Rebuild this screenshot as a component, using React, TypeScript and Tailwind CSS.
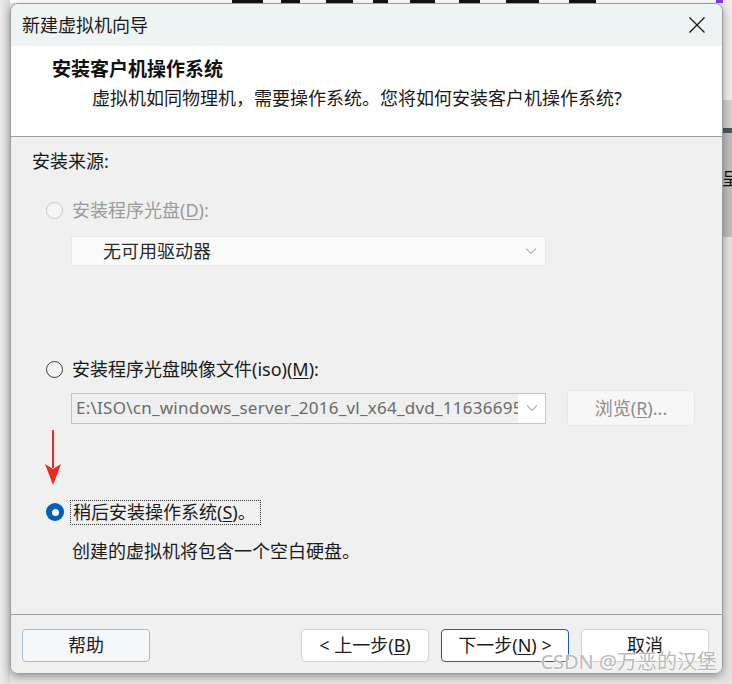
import React from 'react';

const font = { fontFamily: '"Noto Sans", "Noto Sans CJK SC", sans-serif' };

const Chevron: React.FC<{ color: string }> = ({ color }) => (
  <svg width="12" height="8" viewBox="0 0 12 8" fill="none">
    <path d="M1 1.5 L6 6.5 L11 1.5" stroke={color} strokeWidth="1.1" />
  </svg>
);

const Radio: React.FC<{ state: 'disabled' | 'off' | 'on' }> = ({ state }) => {
  if (state === 'on') {
    return (
      <span className="flex h-[18px] w-[18px] items-center justify-center rounded-full bg-[#005fb8]">
        <span className="h-[7px] w-[7px] rounded-full bg-white" />
      </span>
    );
  }
  if (state === 'disabled') {
    return <span className="h-[17px] w-[17px] rounded-full border border-[#c6c6c6] bg-[#f6f6f6]" />;
  }
  return <span className="h-[17px] w-[17px] rounded-full border border-[#3a3a3a] bg-[#f4f4f4]" />;
};

const Btn: React.FC<{ children: React.ReactNode; variant?: 'help' | 'primary' | 'plain' }> = ({ children, variant = 'plain' }) => {
  const cls =
    variant === 'help'
      ? 'border-[#a9bccf] bg-[#f4f8fb]'
      : variant === 'primary'
      ? 'border-[#1a5fa8] bg-white'
      : 'border-[#d2d2d2] bg-white';
  return (
    <button className={`flex h-[33px] w-[128px] items-center justify-center rounded-[4px] border text-[18px] text-[#1b1b1b] ${cls}`}>
      {children}
    </button>
  );
};

// glyph fragments of the desktop text peeking above the dialog
const peek = [
  { w: 'w-[34px]', ml: 'ml-[222px]' },
  { w: 'w-[22px]', ml: 'ml-[18px]' },
  { w: 'w-[30px]', ml: 'ml-[26px]' },
  { w: 'w-[16px]', ml: 'ml-[20px]' },
  { w: 'w-[28px]', ml: 'ml-[22px]' },
  { w: 'w-[24px]', ml: 'ml-[24px]' },
  { w: 'w-[36px]', ml: 'ml-[26px]' },
  { w: 'w-[30px]', ml: 'ml-[30px]' },
];

const App: React.FC = () => {
  return (
    <div className="flex h-[684px] w-[732px] overflow-hidden bg-[#e6e6e6]" style={font}>
      {/* left gutter */}
      <div className="w-[10px] shrink-0 bg-gradient-to-r from-[#ececec] to-[#d8d8d8]" />

      {/* dialog column */}
      <div className="flex w-[713px] shrink-0 flex-col">
        <div className="flex h-[3px] items-start bg-white">
          {peek.map((p, i) => (
            <div key={i} className={`h-[3px] bg-[#151515] ${p.w} ${p.ml}`} />
          ))}
          <div className="ml-[120px] h-[3px] w-[8px] bg-[#7c3aed]" />
        </div>

        <div className="relative flex h-[671px] flex-col overflow-hidden rounded-[8px] border border-[#9c9c9c] shadow-[0_3px_8px_rgba(0,0,0,0.35)]">
          {/* title bar */}
          <div className="flex h-[42px] shrink-0 items-center justify-between bg-[#eef3f3] pl-[11px] pr-[16px]">
            <span className="text-[18px] text-[#1a1a1a]">新建虚拟机向导</span>
            <svg width="18" height="18" viewBox="0 0 18 18">
              <path d="M1.5 1.5 L16.5 16.5 M16.5 1.5 L1.5 16.5" stroke="#1a1a1a" strokeWidth="1.3" />
            </svg>
          </div>

          {/* header */}
          <div className="flex h-[91px] shrink-0 flex-col border-b border-[#a0a0a0] bg-white">
            <div className="ml-[41px] mt-[11px] text-[19px] font-bold leading-[25px] text-[#111]">安装客户机操作系统</div>
            <div className="ml-[81px] mt-[4px] text-[18px] leading-[25px] text-[#1a1a1a]">
              虚拟机如同物理机，需要操作系统。您将如何安装客户机操作系统?
            </div>
          </div>

          {/* body */}
          <div className="relative flex flex-1 flex-col border-b border-[#a0a0a0] bg-[#f0f0f0] pl-[21px]">
            <div className="mt-[12px] text-[18px] leading-[24px] text-[#1a1a1a]">安装来源:</div>

            <div className="ml-[14px] mt-[25px] flex h-[24px] items-center gap-[9px]">
              <Radio state="disabled" />
              <span className="text-[18px] text-[#9b9b9b]">
                安装程序光盘(<span className="underline underline-offset-2">D</span>):
              </span>
            </div>

            <div className="ml-[39px] mt-[14px] flex h-[30px] w-[475px] items-center justify-between border border-[#e8e8e8] bg-[#fafafa] pl-[31px] pr-[8px]">
              <span className="text-[18px] text-[#2a2a2a]">无可用驱动器</span>
              <Chevron color="#b5b5b5" />
            </div>

            <div className="ml-[14px] mt-[91px] flex h-[24px] items-center gap-[9px]">
              <Radio state="off" />
              <span className="text-[18px] text-[#1a1a1a]">
                安装程序光盘映像文件(iso)(<span className="underline underline-offset-2">M</span>):
              </span>
            </div>

            <div className="ml-[39px] mt-[9px] flex items-center gap-[21px]">
              <div className="flex h-[31px] w-[475px] items-center border border-[#c5c5c5] bg-white">
                <div className="flex h-full w-[446px] items-center overflow-hidden whitespace-nowrap bg-[#efefef] pl-[4px] text-[17px] tracking-[0.25px] text-[#6b6b6b]">
                  E:\ISO\cn_windows_server_2016_vl_x64_dvd_11636695
                </div>
                <div className="flex flex-1 items-center justify-center">
                  <Chevron color="#b0b0b0" />
                </div>
              </div>
              <div className="flex h-[36px] w-[128px] items-center justify-center rounded-[4px] border border-[#e6e6e6] bg-[#f7f7f7] text-[18px] text-[#8c8c8c]">
                浏览(<span className="underline underline-offset-2">R</span>)...
              </div>
            </div>

            <div className="ml-[14px] mt-[74px] flex h-[24px] items-center gap-[6px]">
              <Radio state="on" />
              <span className="flex h-[25px] items-center border border-dotted border-[#333] pl-[2px] pr-[4px] text-[18px] text-[#1a1a1a]">
                稍后安装操作系统(<span className="underline underline-offset-2">S</span>)。
              </span>
            </div>

            <div className="ml-[40px] mt-[15px] text-[18px] leading-[24px] text-[#1a1a1a]">创建的虚拟机将包含一个空白硬盘。</div>

            {/* red annotation arrow */}
            <svg className="absolute left-[33px] top-[293px]" width="18" height="56" viewBox="0 0 18 56">
              <path d="M9 0 L9 38" stroke="#ee2a1e" strokeWidth="2" />
              <path d="M1 34 L9 55 L17 34 L9 39 Z" fill="#ee2a1e" />
            </svg>
          </div>

          {/* footer */}
          <div className="flex h-[58px] shrink-0 items-start bg-[#f0f0f0] pl-[11px] pr-[13px] pt-[14px]">
            <Btn variant="help">帮助</Btn>
            <div className="flex-1" />
            <div className="flex gap-[12px]">
              <Btn>
                &lt; 上一步(<span className="underline underline-offset-2">B</span>)
              </Btn>
              <Btn variant="primary">
                下一步(<span className="underline underline-offset-2">N</span>) &gt;
              </Btn>
              <Btn>取消</Btn>
            </div>
          </div>

          {/* watermark */}
          <div
            className="absolute bottom-[0px] right-[5px] text-[20px] leading-[22px] text-[#b9b9b9]"
            style={{ textShadow: '0 0 2px #ffffff, 0 0 2px #ffffff' }}
          >
            CSDN @万恶的汉堡
          </div>
        </div>
      </div>

      {/* right desktop strip */}
      <div className="flex w-[9px] shrink-0 flex-col">
        <div className="h-[100px] bg-[#ececec]" />
        <div className="h-[28px] bg-[#cfcfcf]" />
        <div className="h-[5px] bg-[#4b5563]" />
        <div className="flex h-[104px] items-center overflow-hidden bg-[#bdbdbd] text-[17px] leading-none text-[#111]">
          <span className="-ml-[1px] -mt-[14px]">呈</span>
        </div>
        <div className="flex-1 bg-[#e3e3e3]" />
      </div>
    </div>
  );
};

export default App;
